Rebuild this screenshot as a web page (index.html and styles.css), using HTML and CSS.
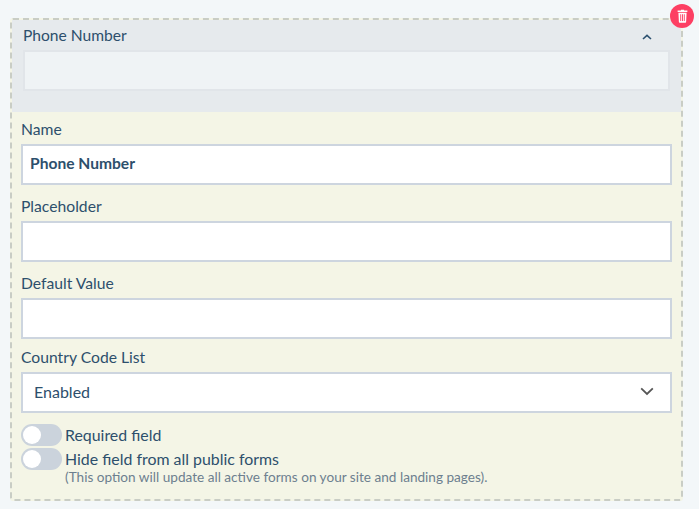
FILE: index.html
```html
<!DOCTYPE html>
<html lang="en">
<head>
    <meta charset="UTF-8">
    <title>Phone Number Field</title>
    <link rel="stylesheet" href="styles.css">
</head>
<body>

<div class="field-card">
    <button class="delete-btn" aria-label="Delete field">
        <svg width="11" height="14" viewBox="0 0 14 16" preserveAspectRatio="none">
            <path d="M5 1.6V.8h4v.8h4.2v1.7H.8V1.6z" fill="#fff"/>
            <path d="M1.8 4.2h10.4l-.6 10.6c0 .5-.4.9-.9.9H3.3c-.5 0-.9-.4-.9-.9z" fill="#fff"/>
            <path d="M4.7 6v7.8M7 6v7.8M9.3 6v7.8" stroke="#fd3f63" stroke-width="1.1"/>
        </svg>
    </button>

    <div class="field-head">
        <div class="field-title">
            <span>Phone Number</span>
            <svg class="caret-up" width="10" height="6" viewBox="0 0 10 6">
                <path d="M1 5l4-3.6L9 5" fill="none" stroke="#2c5170" stroke-width="1.6"/>
            </svg>
        </div>
        <div class="preview-input"></div>
    </div>

    <div class="field-body">
        <div class="form-row">
            <label>Name</label>
            <input class="text-input bold" type="text" value="Phone Number">
        </div>
        <div class="form-row">
            <label>Placeholder</label>
            <input class="text-input" type="text">
        </div>
        <div class="form-row tight">
            <label>Default Value</label>
            <input class="text-input" type="text">
        </div>
        <div class="form-row">
            <label>Country Code List</label>
            <div class="select-box">
                <span>Enabled</span>
                <svg width="14" height="9" viewBox="0 0 14 9">
                    <path d="M1.2 1.4L7 7l5.8-5.6" fill="none" stroke="#555" stroke-width="1.8"/>
                </svg>
            </div>
        </div>

        <div class="toggle-row first">
            <span class="toggle"><span class="knob"></span></span>
            <span class="toggle-label">Required field</span>
        </div>
        <div class="toggle-row">
            <span class="toggle"><span class="knob"></span></span>
            <div>
                <div class="toggle-label">Hide field from all public forms</div>
                <div class="hint">(This option will update all active forms on your site and landing pages).</div>
            </div>
        </div>
    </div>
</div>

</body>
</html>
```

FILE: styles.css
```css
html, body {
    height: 100%;
}
body {
    font-family: Lato, "Open Sans", sans-serif;
    margin: 0;
    padding: 18px 16px 8px 10px;
    box-sizing: border-box;
    background-color: #f3f7f9;
    color: #2d4f6c;
    overflow: hidden;
}
.field-card {
    position: relative;
    height: 483px;
    box-sizing: border-box;
    border: 2px dashed #c9cdc5;
    border-radius: 3px;
    background-color: #f4f5e6;
}
.delete-btn {
    position: absolute;
    top: -16px;
    right: -13px;
    width: 24px;
    height: 24px;
    padding: 0;
    border: none;
    border-radius: 50%;
    background-color: #fd3f63;
    display: flex;
    align-items: center;
    justify-content: center;
}
.field-head {
    height: 92px;
    box-sizing: border-box;
    padding: 2px 11px 0 11px;
    background-color: #e6eaed;
}
.field-title {
    display: flex;
    justify-content: space-between;
    align-items: flex-start;
    height: 28px;
    font-size: 15.6px;
    line-height: 26px;
    padding-right: 18px;
}
.caret-up {
    margin-top: 12px;
}
.preview-input {
    height: 41px;
    box-sizing: border-box;
    border: 2px solid #e1e5e9;
    background-color: #eff3f5;
}
.field-body {
    padding: 6px 9px 0 9px;
}
.form-row {
    margin-bottom: 10px;
}
.form-row.tight {
    margin-bottom: 7px;
}
.form-row label {
    display: block;
    font-size: 15.7px;
    line-height: 23px;
    margin-bottom: 3px;
}
.text-input {
    display: block;
    width: 100%;
    height: 41px;
    box-sizing: border-box;
    padding: 0 7px 3px 7px;
    border: 2px solid #cdd5df;
    border-radius: 0;
    background-color: #fff;
    font-family: inherit;
    font-size: 15.6px;
    color: #2d4f6c;
    outline: none;
}
.text-input.bold {
    font-weight: 700;
}
.select-box {
    display: flex;
    justify-content: space-between;
    align-items: center;
    height: 41px;
    box-sizing: border-box;
    padding: 0 16px 2px 11px;
    border: 2px solid #cdd5df;
    background-color: #fff;
    font-size: 16px;
}
.toggle-row {
    display: flex;
    align-items: flex-start;
    gap: 3px;
    margin-top: 2px;
}
.toggle-row.first {
    margin-top: 11px;
}
.toggle {
    flex: none;
    display: block;
    width: 41px;
    height: 22px;
    border-radius: 11px;
    background-color: #cbd3dc;
}
.knob {
    display: block;
    width: 18px;
    height: 18px;
    margin: 2px;
    border-radius: 50%;
    background-color: #fff;
}
.toggle-label {
    font-size: 15.9px;
    line-height: 22px;
}
.hint {
    font-size: 13.6px;
    line-height: 14px;
    color: #6d7f8f;
}
```
